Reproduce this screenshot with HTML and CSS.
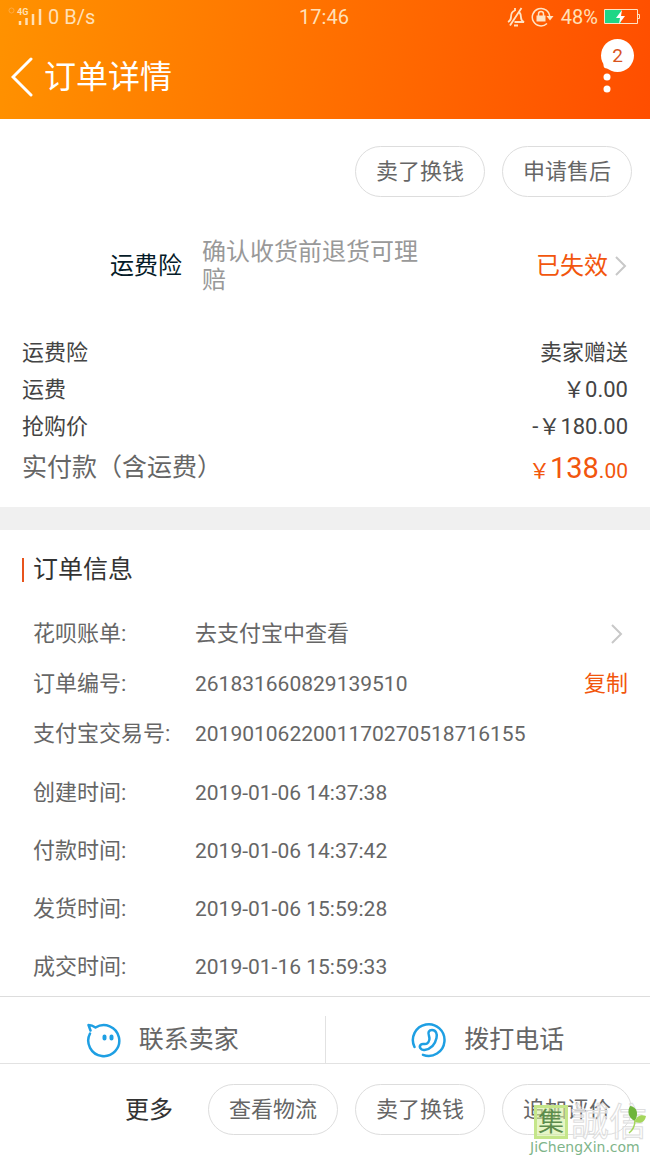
FILE: index.html
```html
<!DOCTYPE html>
<html lang="zh-CN">
<head>
    <meta charset="UTF-8">
    <meta name="viewport" content="width=device-width, initial-scale=1.0">
    <title>订单详情</title>
    <link rel="stylesheet" href="styles.css">
</head>
<body>
    <header class="header">
        <div class="status">
            <div class="status-left">
                <svg class="signal" width="34" height="20" viewBox="0 0 34 20">
                    <circle cx="3.5" cy="3.5" r="2.5" fill="none" stroke="#ffc27a" stroke-width="1" opacity=".5"/>
                    <text x="9" y="8" class="net">4G</text>
                    <path d="M12 14v4M18.500 11v7M25 7v11M32 2v16" fill="none" stroke="#ffe0b5" stroke-width="2.500"/>
                </svg>
                <span>0 B/s</span>
            </div>
            <time class="clock">17:46</time>
            <div class="status-right">
                <svg width="18" height="20" viewBox="0 0 18 20" fill="none" stroke="#ffe3c4" stroke-width="1.800">
                    <path d="M12.500 5.500c1.500 1.500 1.500 3 1.500 5 0 2.500 1 3.500 3 4.500H7.500M1 15c2-1 3-2.500 3-5 0-3 1-5.500 4-6.500M8 1v3M7 18.500h4M14.500 1L3 18.500"/>
                </svg>
                <svg width="24" height="20" viewBox="0 0 24 20" fill="none" stroke="#ffe3c4" stroke-width="1.500">
                    <path d="M16 16.500A8.700 8.700 0 1 1 18.700 10"/>
                    <path d="M15.500 9h7L19 13.500z" fill="#ffe3c4" stroke="none"/>
                    <path d="M5.500 8.500h9v6h-9z" fill="#ffe3c4" stroke="none"/>
                    <path d="M7.500 9V7a2.500 2.500 0 0 1 5 0v2"/>
                </svg>
                <span>48%</span>
                <svg width="36" height="18" viewBox="0 0 36 18">
                    <path d="M1 1h16v15H1z" fill="#1fd686"/>
                    <path d="M.5 1.500h33v14H.5zM34 6.500h1.500v4H34" fill="none" stroke="#ffe3c4"/>
                    <path d="M18 2l-6 8h4l-1 6 6-8h-4z" fill="#fff"/>
                </svg>
            </div>
        </div>
        <div class="titlebar">
            <button class="back" aria-label="返回">
                <svg width="24" height="40" viewBox="0 0 24 40"><path d="M20 2L2 20l18 18" fill="none" stroke="#fff" stroke-width="3" stroke-linecap="round"/></svg>
            </button>
            <h1>订单详情</h1>
            <button class="menu" aria-label="更多操作">
                <svg width="8" height="32" viewBox="0 0 8 32" fill="#fff"><circle cx="4" cy="4" r="3.500"/><circle cx="4" cy="16" r="3.500"/><circle cx="4" cy="28" r="3.500"/></svg>
                <span class="badge">2</span>
            </button>
        </div>
    </header>

    <main>
        <div class="actions">
            <button class="pill">卖了换钱</button>
            <button class="pill">申请售后</button>
        </div>

        <a class="insurance" href="#">
            <span class="insurance-name">运费险</span>
            <span class="insurance-desc">确认收货前退货可理赔</span>
            <span class="insurance-state">已失效</span>
            <svg class="arrow" width="14" height="22" viewBox="0 0 14 22"><path d="M2 2l9 9-9 9"/></svg>
        </a>

        <dl class="prices">
            <div><dt>运费险</dt><dd>卖家赠送</dd></div>
            <div><dt>运费</dt><dd>￥0.00</dd></div>
            <div><dt>抢购价</dt><dd>-￥180.00</dd></div>
            <div class="total"><dt>实付款（含运费）</dt><dd>￥<b>138</b>.00</dd></div>
        </dl>

        <section class="info">
            <h2>订单信息</h2>
            <dl class="rows">
                <div>
                    <dt>花呗账单:</dt><dd>去支付宝中查看</dd>
                    <svg class="arrow" width="14" height="22" viewBox="0 0 14 22"><path d="M2 2l9 9-9 9"/></svg>
                </div>
                <div><dt>订单编号:</dt><dd class="num">261831660829139510</dd><button class="copy">复制</button></div>
                <div><dt>支付宝交易号:</dt><dd class="num">2019010622001170270518716155</dd></div>
            </dl>
            <dl class="rows times">
                <div><dt>创建时间:</dt><dd class="num">2019-01-06 14:37:38</dd></div>
                <div><dt>付款时间:</dt><dd class="num">2019-01-06 14:37:42</dd></div>
                <div><dt>发货时间:</dt><dd class="num">2019-01-06 15:59:28</dd></div>
                <div><dt>成交时间:</dt><dd class="num">2019-01-16 15:59:33</dd></div>
            </dl>
        </section>
    </main>

    <div class="contact">
        <button>
            <svg width="36" height="36" viewBox="0 0 36 36" fill="none" stroke="#1e9fe3" stroke-width="2.500" stroke-linecap="round" stroke-linejoin="round">
                <path d="M4 11.500A15.500 15.500 0 1 0 9.500 5.500Q6 3 2.500 3L4.500 8.500"/>
                <path d="M18.500 14.500v2M25.500 14.500v2" stroke-width="4"/>
            </svg>
            联系卖家
        </button>
        <button>
            <svg width="36" height="36" viewBox="0 0 36 36" fill="none" stroke="#1e9fe3" stroke-width="2.500" stroke-linecap="round" stroke-linejoin="round">
                <path d="M3.500 25A15.800 15.800 0 1 1 12 32.800"/>
                <path d="M18 14c-1.500-3.500 0-6 3-6 4 0 5.500 4 4.500 8-1.500 7-6 11-12 12-4 .5-6-3.500-3.500-5.500 2-1.500 4 .5 6-1 2.500-2 3-4.500 2-7.500z"/>
            </svg>
            拨打电话
        </button>
    </div>

    <footer class="footer">
        <button class="more">更多</button>
        <button class="pill">查看物流</button>
        <button class="pill">卖了换钱</button>
        <button class="pill">追加评价</button>
        <div class="watermark">
            <div class="mark-name">
                <span class="seal">集</span>
                <span class="outline">誠信</span>
                <svg class="leaf" width="20" height="30" viewBox="0 0 20 30">
                    <path d="M3 1c7 1 9 7 5 15C1 13 0 6 3 1z" fill="#6fb53c"/>
                    <path d="M8 17c1-6 6-8 11-6-1 6-5 8-11 6z" fill="#a5d65c"/>
                    <path d="M8 15c0 6-2 10-6 13" fill="none" stroke="#a5d65c" stroke-width="1.500"/>
                </svg>
            </div>
            <div class="mark-url">JiChengXin.com</div>
        </div>
    </footer>
</body>
</html>
```
FILE: styles.css
```css
* {
    box-sizing: border-box;
}
body {
    margin: 0;
    background: #fff;
    color: #666;
    font-family: Roboto, "Noto Sans CJK SC", sans-serif;
    font-size: 22px;
    line-height: 32px;
}
h1, h2, dl, dd {
    margin: 0;
    font-weight: normal;
}
button {
    padding: 0;
    border: none;
    background: none;
    color: inherit;
    font: inherit;
    cursor: pointer;
}
svg {
    display: block;
    flex: none;
}

/* header */
.header {
    background: linear-gradient(100deg, #ff9200, #ff7000 50%, #ff4e00);
    color: #fff;
}
.status {
    display: grid;
    grid-template-columns: 1fr auto 1fr;
    align-items: center;
    height: 34px;
    padding: 0 10px 0 8px;
    color: #ffe0b8;
    font-size: 20px;
}
.status-left, .status-right {
    display: flex;
    align-items: center;
    gap: 6px;
}
.status-right {
    justify-content: flex-end;
}
.net {
    fill: #ffe0b5;
    font-size: 9px;
    font-weight: bold;
}
.titlebar {
    display: flex;
    align-items: center;
    gap: 9px;
    height: 85px;
    padding: 0 39px 0 11px;
}
.titlebar h1 {
    flex: 1;
    font-size: 32px;
    line-height: 40px;
}
.menu {
    position: relative;
}
.badge {
    position: absolute;
    top: -22px;
    left: -2px;
    width: 33px;
    height: 33px;
    border-radius: 50%;
    background: #fff;
    color: #d9541e;
    font-size: 19px;
    line-height: 33px;
}

.pill {
    width: 130px;
    height: 51px;
    border: 1px solid #ddd;
    border-radius: 26px;
    background: #fff;
}
.actions {
    display: flex;
    justify-content: flex-end;
    gap: 17px;
    padding: 27px 18px 0;
}

/* shipping insurance */
.insurance {
    display: flex;
    align-items: center;
    margin-top: 41px;
    padding: 0 22px 0 110px;
    color: #051b28;
    font-size: 24px;
    line-height: 28px;
    text-decoration: none;
}
.insurance-desc {
    width: 220px;
    margin-left: 20px;
    color: #999;
}
.insurance-state {
    margin-left: auto;
    color: #f2560d;
}
.arrow {
    margin-left: 6px;
    fill: none;
    stroke: #c8c8c8;
    stroke-width: 2;
}

.prices {
    padding: 40px 22px 13px;
    border-bottom: 23px solid #f0f0f0;
    color: #444;
}
.prices div {
    display: flex;
    justify-content: space-between;
    line-height: 37px;
}
.prices .total {
    color: #666;
    font-size: 25px;
    line-height: 46px;
}
.total dd {
    color: #f2560d;
    font-size: 21px;
}
.total b {
    font-size: 29px;
    font-weight: normal;
}

/* order info */
.info {
    padding: 24px 22px 0;
}
.info h2 {
    display: flex;
    align-items: center;
    gap: 9px;
    color: #333;
    font-size: 25px;
}
.info h2::before {
    content: "";
    width: 2px;
    height: 24px;
    background: #e8541c;
}
.rows {
    padding: 23px 0 0 11px;
}
.rows div {
    display: flex;
    align-items: center;
    height: 50px;
}
.rows dt {
    width: 162px;
}
.rows dd {
    flex: 1;
}
.rows .num {
    font-size: 21px;
}
.rows .arrow {
    margin-right: 4px;
}
.rows.times {
    padding-top: 5px;
}
.times div {
    height: 58px;
}
.copy {
    color: #f2560d;
}

/* bottom bars */
.contact {
    display: flex;
    height: 68px;
    border-top: 1px solid #ddd;
    border-bottom: 1px solid #e2e2e2;
    font-size: 25px;
}
.contact button {
    display: flex;
    flex: 1;
    align-items: center;
    justify-content: center;
    gap: 17px;
    margin-top: 19px;
}
.contact button + button {
    border-left: 1px solid #e2e2e2;
}
.footer {
    position: relative;
    display: flex;
    align-items: center;
    justify-content: flex-end;
    gap: 17px;
    height: 91px;
    padding: 0 18px;
}
.more {
    margin-right: 18px;
    color: #333;
    font-size: 24px;
}

/* site mark over the last button */
.watermark {
    position: absolute;
    right: 0;
    bottom: 0;
    width: 120px;
    pointer-events: none;
}
.mark-name {
    display: flex;
    align-items: center;
    gap: 3px;
    padding-left: 4px;
}
.seal {
    width: 34px;
    height: 34px;
    border: 3px solid #c5e68a;
    background: rgba(214, 240, 160, 0.6);
    color: #5d8c4c;
    font-size: 26px;
    line-height: 28px;
    text-align: center;
}
.outline {
    color: rgba(255, 255, 255, 0.7);
    font-size: 38px;
    -webkit-text-stroke: 1px #ddd;
}
.leaf {
    position: absolute;
    top: 0;
    right: 3px;
}
.mark-url {
    color: #7fb58a;
    font-family: "DejaVu Sans", sans-serif;
    font-size: 14px;
    line-height: 16px;
    white-space: nowrap;
}
```
